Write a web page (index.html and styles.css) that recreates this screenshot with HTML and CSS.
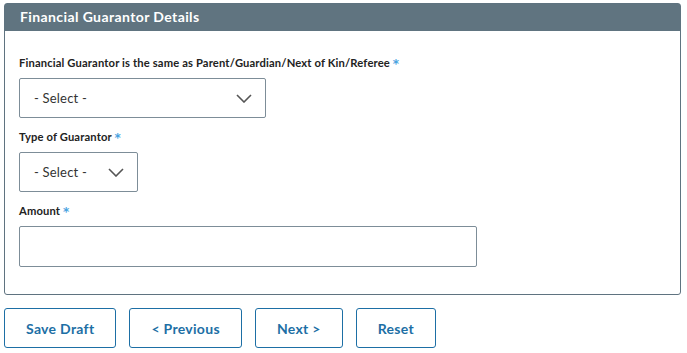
FILE: index.html
```html
<!DOCTYPE html>
<html lang="en">
<head>
  <meta charset="UTF-8">
  <meta name="viewport" content="width=device-width, initial-scale=1.0">
  <title>Financial Guarantor Details</title>
  <link rel="stylesheet" href="styles.css">
</head>
<body>

  <div class="panel">
    <div class="panel-header">Financial Guarantor Details</div>
    <div class="panel-body">
      <div class="field">
        <label class="field-label">Financial Guarantor is the same as Parent/Guardian/Next of Kin/Referee <span class="req">*</span></label>
        <div class="select select-wide">
          <span>- Select -</span>
          <svg class="chevron" width="16" height="9" viewBox="0 0 16 9"><path d="M1 1 L8 8 L15 1" fill="none" stroke="#555" stroke-width="1.6"/></svg>
        </div>
      </div>
      <div class="field">
        <label class="field-label">Type of Guarantor <span class="req">*</span></label>
        <div class="select select-narrow">
          <span>- Select -</span>
          <svg class="chevron" width="16" height="9" viewBox="0 0 16 9"><path d="M1 1 L8 8 L15 1" fill="none" stroke="#555" stroke-width="1.6"/></svg>
        </div>
      </div>
      <div class="field">
        <label class="field-label">Amount <span class="req">*</span></label>
        <input class="text-input" type="text">
      </div>
    </div>
  </div>

  <div class="actions">
    <button class="btn">Save Draft</button>
    <button class="btn">&lt; Previous</button>
    <button class="btn">Next &gt;</button>
    <button class="btn">Reset</button>
  </div>

</body>
</html>
```

FILE: styles.css
```css
body {
  font-family: Lato, 'Open Sans', sans-serif;
  background-color: #fff;
  margin: 0;
  padding: 3px 6px 0 4px;
  color: #222;
}

.panel {
  border: 1px solid #5f7380;
  border-radius: 3px;
}

.panel-header {
  background-color: #607480;
  color: #fff;
  font-size: 14px;
  font-weight: bold;
  letter-spacing: 0.4px;
  height: 27px;
  line-height: 25px;
  padding: 0 15px;
}

.panel-body {
  padding: 25px 14px 15px;
}

.field {
  margin-bottom: 12px;
}

.field-label {
  display: block;
  font-size: 11.2px;
  font-weight: bold;
  letter-spacing: 0.15px;
  line-height: 14px;
  height: 14px;
  margin-bottom: 8px;
  color: #222;
}

.req {
  font-family: 'DejaVu Sans', sans-serif;
  color: #4aa3df;
  font-size: 12px;
  line-height: 0;
  vertical-align: -1px;
}

.select {
  display: flex;
  align-items: center;
  justify-content: space-between;
  box-sizing: border-box;
  height: 40px;
  padding: 0 13px 0 14px;
  border: 1px solid #7d8d98;
  border-radius: 2px;
  font-size: 13px;
  letter-spacing: 0.2px;
  color: #333;
}

.select-wide {
  width: 247px;
}

.select-narrow {
  width: 119px;
}

.text-input {
  display: block;
  box-sizing: border-box;
  width: 458px;
  height: 41px;
  border: 1px solid #7d8d98;
  border-radius: 2px;
  margin: 0;
}

.actions {
  display: flex;
  gap: 13px;
  margin-top: 13px;
}

.btn {
  height: 40px;
  padding: 0 21px;
  font-family: Lato, 'Open Sans', sans-serif;
  font-size: 14px;
  font-weight: bold;
  letter-spacing: 0.3px;
  color: #1d6fa5;
  background-color: #fff;
  border: 1px solid #1d6fa5;
  border-radius: 3px;
  cursor: pointer;
}
```
